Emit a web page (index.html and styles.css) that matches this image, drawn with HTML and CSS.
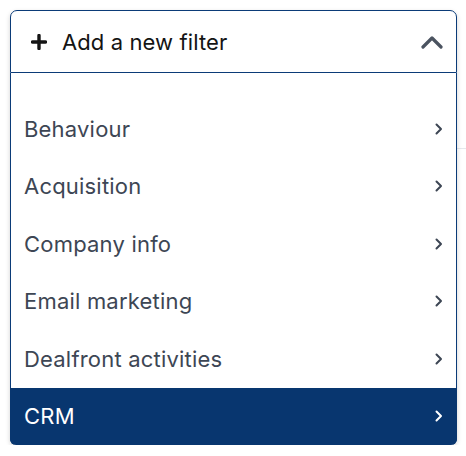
FILE: index.html
```html
<!DOCTYPE html>
<html>
<head>
<meta charset="utf-8">
<link rel="stylesheet" href="styles.css">
</head>
<body>
<div class="bg-line"></div>
<div class="filter">
  <div class="filter-head">
    <svg class="plus" width="16" height="16" viewBox="0 0 16 16"><path d="M8 1.5v13M1.5 8h13" stroke="#151515" stroke-width="3.4" stroke-linecap="round"/></svg>
    <span class="head-label">Add a new filter</span>
    <svg class="caret-up" width="22" height="14" viewBox="0 0 22 14"><path d="M2 12L11 3l9 9" fill="none" stroke="#4b5360" stroke-width="3.2" stroke-linecap="round" stroke-linejoin="round"/></svg>
  </div>
  <ul class="menu">
    <li class="item"><span>Behaviour</span><svg class="chev" width="8" height="12" viewBox="0 0 8 12"><path d="M1.5 1.5L6 6l-4.5 4.5" fill="none" stroke="currentColor" stroke-width="2" stroke-linecap="round" stroke-linejoin="round"/></svg></li>
    <li class="item"><span>Acquisition</span><svg class="chev" width="8" height="12" viewBox="0 0 8 12"><path d="M1.5 1.5L6 6l-4.5 4.5" fill="none" stroke="currentColor" stroke-width="2" stroke-linecap="round" stroke-linejoin="round"/></svg></li>
    <li class="item"><span>Company info</span><svg class="chev" width="8" height="12" viewBox="0 0 8 12"><path d="M1.5 1.5L6 6l-4.5 4.5" fill="none" stroke="currentColor" stroke-width="2" stroke-linecap="round" stroke-linejoin="round"/></svg></li>
    <li class="item"><span>Email marketing</span><svg class="chev" width="8" height="12" viewBox="0 0 8 12"><path d="M1.5 1.5L6 6l-4.5 4.5" fill="none" stroke="currentColor" stroke-width="2" stroke-linecap="round" stroke-linejoin="round"/></svg></li>
    <li class="item"><span>Dealfront activities</span><svg class="chev" width="8" height="12" viewBox="0 0 8 12"><path d="M1.5 1.5L6 6l-4.5 4.5" fill="none" stroke="currentColor" stroke-width="2" stroke-linecap="round" stroke-linejoin="round"/></svg></li>
    <li class="item active"><span>CRM</span><svg class="chev" width="8" height="12" viewBox="0 0 8 12"><path d="M1.5 1.5L6 6l-4.5 4.5" fill="none" stroke="currentColor" stroke-width="2" stroke-linecap="round" stroke-linejoin="round"/></svg></li>
  </ul>
</div>
</body>
</html>
```

FILE: styles.css
```css
html, body {
  margin: 0;
  padding: 0;
  background: #ffffff;
}
body {
  font-family: Inter, "Noto Sans", sans-serif;
  padding: 10px 9px 0 10px;
  position: relative;
}
.bg-line {
  position: absolute;
  left: 456px;
  top: 148px;
  width: 10px;
  height: 1px;
  background: #e6e8ec;
}
.filter {
  position: relative;
  width: 447px;
  border-radius: 7px;
  box-shadow: 0 2px 5px rgba(0, 0, 0, 0.18);
  background: #fff;
}
.filter-head {
  box-sizing: border-box;
  height: 63px;
  border: 1px solid #0b3b78;
  border-radius: 7px 7px 0 0;
  display: flex;
  align-items: center;
  padding: 0 13px 0 20px;
}
.plus {
  display: block;
  margin-right: 15px;
}
.head-label {
  flex: 1;
  font-size: 22px;
  color: #141414;
  letter-spacing: 0.1px;
}
.caret-up {
  display: block;
}
.menu {
  list-style: none;
  margin: 0;
  padding: 27px 0 0;
  border-left: 1px solid #0b3b78;
  border-right: 1px solid #0b3b78;
  border-radius: 0 0 6px 6px;
}
.item {
  height: 57.5px;
  display: flex;
  align-items: center;
  justify-content: space-between;
  padding: 0 13px 0 13px;
  font-size: 22px;
  letter-spacing: 0.2px;
  color: #3d4654;
}
.chev {
  display: block;
  color: #3d4654;
}
.item.active {
  background: #08366f;
  color: #ffffff;
  margin: 0 -1px;
  padding: 0 14px 0 14px;
  border-radius: 0 0 6px 6px;
  height: 57px;
}
.item.active .chev {
  color: #ffffff;
}
```
